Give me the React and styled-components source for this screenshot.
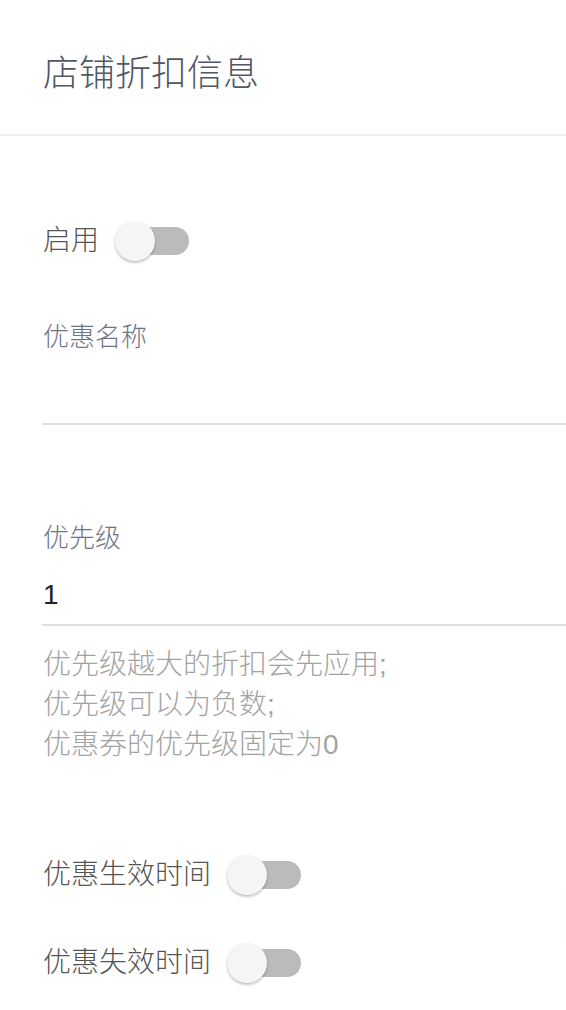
import styled, { createGlobalStyle } from 'styled-components';

const GlobalStyle = createGlobalStyle`
    html, body {
        margin: 0;
        padding: 0;
        background: #fff;
        overflow: hidden;
    }
    body {
        font-family: "Liberation Sans", "Noto Sans CJK SC", sans-serif;
    }
`;

const Page = styled.div`
    width: 566px;
    min-height: 1010px;
    background: #fff;
`;

const Header = styled.header`
    height: 136px;
    box-sizing: border-box;
    padding: 48px 43px 0;
    border-bottom: 2px solid #f0f0f4;
`;

const Title = styled.h1`
    margin: 0;
    font-size: 36px;
    line-height: 52px;
    font-weight: 300;
    color: #515767;
`;

const Form = styled.div`
    padding-left: 42px;
    display: flex;
    flex-direction: column;
`;

const ToggleRow = styled.div`
    display: flex;
    align-items: center;
    gap: 16px;
    height: 40px;
    margin-top: ${(props) => props.mt}px;
`;

const ToggleLabel = styled.span`
    font-size: 28px;
    line-height: 40px;
    font-weight: 300;
    color: #555;
    padding-left: 1px;
`;

const Switch = styled.div`
    position: relative;
    width: 74px;
    height: 40px;
    flex-shrink: 0;
`;

const Track = styled.div`
    position: absolute;
    left: 6px;
    top: 6px;
    width: 68px;
    height: 28px;
    border-radius: 14px;
    background: #bbbbbb;
`;

const Knob = styled.div`
    position: absolute;
    left: 0;
    top: 0;
    width: 40px;
    height: 40px;
    border-radius: 50%;
    background: #f5f5f5;
    box-shadow: 0 2px 3px rgba(0, 0, 0, 0.18), 0 1px 2px rgba(0, 0, 0, 0.1);
`;

const Field = styled.div`
    display: flex;
    flex-direction: column;
    margin-top: ${(props) => props.mt}px;
`;

const Label = styled.label`
    font-size: 26px;
    line-height: 36px;
    font-weight: 300;
    color: #6d7587;
    padding-left: 1px;
`;

const Input = styled.div`
    height: 68px;
    border-bottom: 2px solid #dedede;
    font-size: 28px;
    line-height: 78px;
    color: #222;
    padding-left: 1px;
`;

const Help = styled.div`
    margin-top: 19px;
    font-size: 28px;
    line-height: 40px;
    font-weight: 300;
    color: #a3a3a3;
    padding-left: 1px;
`;

const Fab = styled.div`
    position: fixed;
    left: 572px;
    top: 880px;
    width: 72px;
    height: 72px;
    border-radius: 50%;
    background: #fff;
    box-shadow: 0 0 18px rgba(0, 0, 0, 0.08);
`;

const Toggle = () => (
    <Switch>
        <Track />
        <Knob />
    </Switch>
);

const App = () => {
    return (
        <Page>
            <GlobalStyle />
            <Header>
                <Title>店铺折扣信息</Title>
            </Header>
            <Form>
                <ToggleRow mt={85}>
                    <ToggleLabel>启用</ToggleLabel>
                    <Toggle />
                </ToggleRow>
                <Field mt={58}>
                    <Label>优惠名称</Label>
                    <Input />
                </Field>
                <Field mt={95}>
                    <Label>优先级</Label>
                    <Input>1</Input>
                    <Help>
                        优先级越大的折扣会先应用;
                        <br />
                        优先级可以为负数;
                        <br />
                        优惠券的优先级固定为0
                    </Help>
                </Field>
                <ToggleRow mt={90}>
                    <ToggleLabel>优惠生效时间</ToggleLabel>
                    <Toggle />
                </ToggleRow>
                <ToggleRow mt={48}>
                    <ToggleLabel>优惠失效时间</ToggleLabel>
                    <Toggle />
                </ToggleRow>
            </Form>
            <Fab />
        </Page>
    );
};

export default App;
